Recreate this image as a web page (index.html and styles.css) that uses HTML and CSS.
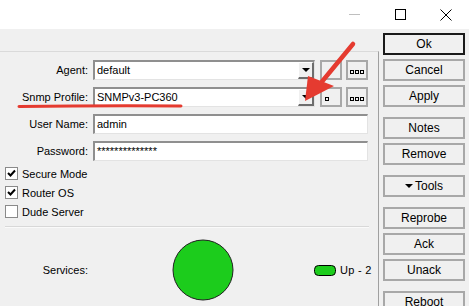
FILE: index.html
```html
<!DOCTYPE html>
<html lang="en">
<head>
    <meta charset="UTF-8">
    <title>SNMP Device</title>
    <link rel="stylesheet" href="styles.css">
</head>
<body>
<div class="window">

    <!-- Title bar with caption buttons -->
    <div class="titlebar">
        <span class="caption">
            <svg width="11" height="1" viewBox="0 0 11 1"><rect width="11" height="1" fill="#bfbfbf"/></svg>
        </span>
        <span class="caption">
            <svg width="11" height="11" viewBox="0 0 11 11"><rect x="0.5" y="0.5" width="10" height="10" fill="none" stroke="#000"/></svg>
        </span>
        <span class="caption">
            <svg width="12" height="12" viewBox="0 0 12 12"><path d="M0.5 0.5 L11.5 11.5 M11.5 0.5 L0.5 11.5" stroke="#000" stroke-width="1"/></svg>
        </span>
    </div>

    <div class="content">
        <div class="panel">
            <div class="form">
                <div class="row">
                    <label class="lbl">Agent:</label>
                    <div class="combo">
                        <span class="value">default</span>
                        <span class="drop"><i class="tri"></i></span>
                    </div>
                    <span class="mini"></span>
                    <span class="mini"><i class="sq"></i><i class="sq"></i><i class="sq"></i></span>
                </div>
                <div class="row">
                    <label class="lbl">Snmp Profile:</label>
                    <div class="combo">
                        <span class="value">SNMPv3-PC360</span>
                        <span class="drop"><i class="tri"></i></span>
                    </div>
                    <span class="mini left"><i class="sq"></i></span>
                    <span class="mini"><i class="sq"></i><i class="sq"></i><i class="sq"></i></span>
                </div>
                <div class="row">
                    <label class="lbl">User Name:</label>
                    <div class="field"><span class="value">admin</span></div>
                </div>
                <div class="row">
                    <label class="lbl">Password:</label>
                    <div class="field"><span class="value">**************</span></div>
                </div>
            </div>

            <div class="checks">
                <div class="check">
                    <span class="box"><svg width="9" height="9" viewBox="0 0 9 9"><path d="M1 4 L3.5 6.5 L8 1.5" fill="none" stroke="#000" stroke-width="2"/></svg></span>
                    Secure Mode
                </div>
                <div class="check">
                    <span class="box"><svg width="9" height="9" viewBox="0 0 9 9"><path d="M1 4 L3.5 6.5 L8 1.5" fill="none" stroke="#000" stroke-width="2"/></svg></span>
                    Router OS
                </div>
                <div class="check">
                    <span class="box"></span>
                    Dude Server
                </div>
            </div>

            <div class="sep"></div>

            <div class="services">
                <label class="lbl">Services:</label>
                <svg class="status" width="62" height="62" viewBox="0 0 62 62">
                    <circle cx="31" cy="31" r="30" fill="#1ccc1c" stroke="#1f1f1f" stroke-width="1"/>
                </svg>
                <span class="legend">
                    <svg width="22" height="11" viewBox="0 0 22 11"><rect x="0.5" y="0.5" width="21" height="10" rx="4" fill="#1ccc1c" stroke="#000"/></svg>
                    Up - 2
                </span>
            </div>
        </div>

        <!-- Buttons column -->
        <div class="actions">
            <div class="group">
                <button class="btn default">Ok</button>
                <button class="btn">Cancel</button>
                <button class="btn">Apply</button>
            </div>
            <div class="group">
                <button class="btn">Notes</button>
                <button class="btn">Remove</button>
            </div>
            <div class="group">
                <button class="btn"><i class="tri"></i>Tools</button>
            </div>
            <div class="group">
                <button class="btn">Reprobe</button>
                <button class="btn">Ack</button>
                <button class="btn">Unack</button>
            </div>
            <div class="group">
                <button class="btn">Reboot</button>
            </div>
        </div>
    </div>

    <!-- Red annotation drawn over the window -->
    <svg class="annot" width="469" height="306" viewBox="0 0 469 306">
        <path d="M19 106.5 Q100 105.5 181 106" fill="none" stroke="#e53b30" stroke-width="3" stroke-linecap="round"/>
        <path d="M353 44 L320 84" fill="none" stroke="#e53b30" stroke-width="4.5" stroke-linecap="round"/>
        <polygon points="305,101 308,76 334,86" fill="#e53b30"/>
    </svg>
</div>
</body>
</html>
```

FILE: styles.css
```css
html, body {
    margin: 0;
    height: 100%;
    font-family: "Liberation Sans", Arial, sans-serif;
    font-size: 11px;
    color: #000;
}

.window {
    position: relative;
    width: 469px;
    height: 306px;
    overflow: hidden;
    background-color: #f0f0f0;
}

/* Title bar */
.titlebar {
    display: flex;
    justify-content: flex-end;
    height: 29px;
    background-color: #fff;
}

.caption {
    display: flex;
    align-items: center;
    justify-content: center;
    width: 46px;
    height: 29px;
}

.content {
    display: flex;
    height: 277px;
}

/* Left panel with the form */
.panel {
    width: 378px;
    margin-top: 22px;
    border-top: 1px solid #dadada;
    border-right: 1px solid #a0a0a0;
}

.form {
    display: flex;
    flex-direction: column;
    gap: 7px;
    padding-top: 8px;
}

.row {
    display: flex;
    align-items: center;
    height: 20px;
}

.lbl {
    width: 88px;
    margin-right: 5px;
    text-align: right;
    flex-shrink: 0;
}

.combo, .field {
    display: flex;
    align-items: stretch;
    box-sizing: border-box;
    height: 20px;
    background-color: #fff;
    border-top: 2px solid #8f8f8f;
    border-left: 2px solid #8f8f8f;
    border-right: 1px solid #e3e3e3;
    border-bottom: 1px solid #e3e3e3;
}

.combo {
    width: 222px;
}

.field {
    width: 275px;
}

.value {
    flex: 1;
    padding-left: 2px;
    line-height: 17px;
    white-space: nowrap;
}

.drop {
    display: flex;
    align-items: center;
    justify-content: center;
    box-sizing: border-box;
    width: 16px;
    background-color: #f0f0f0;
    border-top: 1px solid #fff;
    border-left: 1px solid #fff;
    border-right: 2px solid #6d6d6d;
    border-bottom: 2px solid #6d6d6d;
}

.tri {
    display: inline-block;
    width: 0;
    height: 0;
    border-left: 4px solid transparent;
    border-right: 4px solid transparent;
    border-top: 4px solid #000;
}

.mini {
    display: flex;
    align-items: flex-end;
    justify-content: center;
    gap: 1px;
    box-sizing: border-box;
    width: 22px;
    height: 20px;
    margin-left: 4px;
    padding-bottom: 4px;
    background-color: #f0f0f0;
    border: 2px solid #a8a8a8;
}

.mini:first-of-type {
    margin-left: 5px;
}

.mini.left {
    justify-content: flex-start;
    padding-left: 3px;
}

.sq {
    display: block;
    box-sizing: border-box;
    width: 4px;
    height: 4px;
    border: 1px solid #000;
}

/* Checkboxes */
.checks {
    display: flex;
    flex-direction: column;
    margin-top: 3px;
    padding-left: 5px;
}

.check {
    display: flex;
    align-items: center;
    gap: 4px;
    height: 19px;
}

.box {
    display: flex;
    align-items: center;
    justify-content: center;
    box-sizing: border-box;
    width: 13px;
    height: 13px;
    background-color: #fff;
    border: 1px solid #8a8a8a;
}

.sep {
    height: 1px;
    margin: 5px 9px 0 5px;
    background-color: #d8d8d8;
    border-bottom: 1px solid #fafafa;
}

/* Services status */
.services {
    display: flex;
    align-items: center;
    padding-top: 11px;
}

.services .lbl {
    margin-right: 0;
}

.status {
    margin-left: 84px;
}

.legend {
    display: flex;
    align-items: center;
    gap: 4px;
    margin-left: 80px;
    letter-spacing: 0.3px;
}

/* Right column of buttons */
.actions {
    display: flex;
    flex-direction: column;
    gap: 10px;
    padding-top: 4px;
    margin-left: 4px;
}

.group {
    display: flex;
    flex-direction: column;
    gap: 4px;
}

.btn {
    display: flex;
    align-items: center;
    justify-content: center;
    gap: 2px;
    box-sizing: border-box;
    width: 82px;
    height: 22px;
    padding: 0;
    font-family: inherit;
    font-size: 12px;
    color: #000;
    background-color: #f0f0f0;
    border: 2px solid #a8a8a8;
}

.btn.default {
    border-color: #1a1a1a;
}

.annot {
    position: absolute;
    left: 0;
    top: 0;
    pointer-events: none;
}
```
